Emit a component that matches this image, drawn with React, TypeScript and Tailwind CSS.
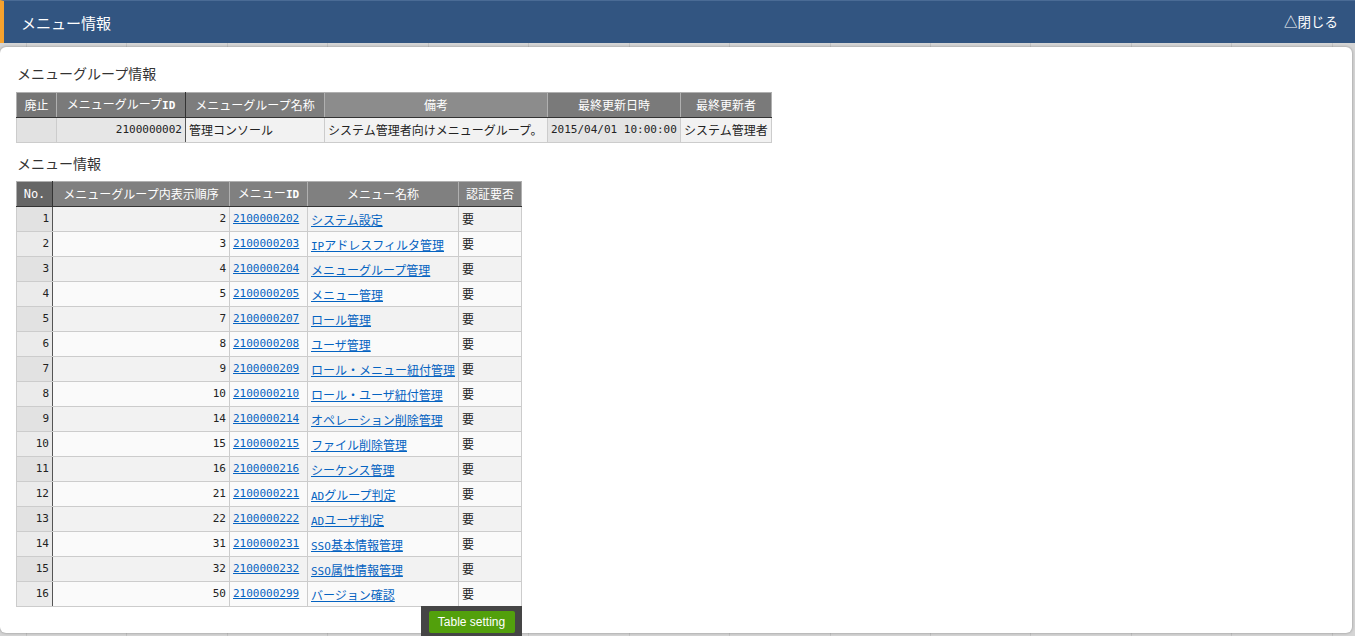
import React from "react";

const jp = "font-['Noto_Sans_CJK_JP',sans-serif]";
const mono = "font-['DejaVu_Sans_Mono','Noto_Sans_CJK_JP',monospace]";

const rows: [number, number, string, string][] = [
  [1, 2, "2100000202", "システム設定"],
  [2, 3, "2100000203", "IPアドレスフィルタ管理"],
  [3, 4, "2100000204", "メニューグループ管理"],
  [4, 5, "2100000205", "メニュー管理"],
  [5, 7, "2100000207", "ロール管理"],
  [6, 8, "2100000208", "ユーザ管理"],
  [7, 9, "2100000209", "ロール・メニュー紐付管理"],
  [8, 10, "2100000210", "ロール・ユーザ紐付管理"],
  [9, 14, "2100000214", "オペレーション削除管理"],
  [10, 15, "2100000215", "ファイル削除管理"],
  [11, 16, "2100000216", "シーケンス管理"],
  [12, 21, "2100000221", "ADグループ判定"],
  [13, 22, "2100000222", "ADユーザ判定"],
  [14, 31, "2100000231", "SSO基本情報管理"],
  [15, 32, "2100000232", "SSO属性情報管理"],
  [16, 50, "2100000299", "バージョン確認"],
];

function Mixed({ text }: { text: string }) {
  const parts = text.match(/[A-Za-z0-9]+|[^A-Za-z0-9]+/g) || [];
  return (
    <>
      {parts.map((p, i) =>
        /^[A-Za-z0-9]+$/.test(p) ? (
          <span key={i} className="font-['DejaVu_Sans_Mono',monospace] text-[11px]">
            {p}
          </span>
        ) : (
          <span key={i} className={`${jp} text-[12px]`}>
            {p}
          </span>
        )
      )}
    </>
  );
}

export default function App() {
  const th =
    "h-[25px] p-0 px-[3px] border border-[#b0b0b0] border-b-[#333] border-b-dotted text-white text-[12px] font-normal text-center whitespace-nowrap";
  const td = "h-[24px] p-0 px-[3px] border border-[#cccccc] text-[#222] whitespace-nowrap";
  return (
    <div className="h-[636px] w-[1355px] overflow-hidden flex flex-col bg-[#d5d5d5] bg-[repeating-linear-gradient(90deg,transparent_0px,transparent_26px,#c4c4c4_26px,#c4c4c4_27px,transparent_27px,transparent_100.45px)]">
      {/* header */}
      <div className="h-[43px] shrink-0 bg-[#325581] border-l-[4px] border-[#f6a22e] flex items-center justify-between pl-[17px] pr-[17px] border-t border-t-[#4a6b95]">
        <div className={`${jp} text-white text-[15px] leading-none`}>メニュー情報</div>
        <div className={`${jp} text-white text-[13.5px] leading-none`}>△閉じる</div>
      </div>

      {/* card */}
      <div className="mt-[4px] mr-[3px] h-[586px] bg-white rounded-[6px] shadow-[0_0_3px_rgba(0,0,0,0.35)] pl-[16px] pt-[16px] relative">
        <div className={`${jp} text-[14px] text-[#333] leading-[20px] pl-[1px]`}>メニューグループ情報</div>
        <table className="mt-[9px] border-collapse table-fixed border border-[#222] w-[755px]">
          <colgroup>
            <col className="w-[40px]" />
            <col className="w-[129px]" />
            <col className="w-[139px]" />
            <col className="w-[223px]" />
            <col className="w-[133px]" />
            <col className="w-[91px]" />
          </colgroup>
          <thead>
            <tr>
              <th className={`${th} ${jp} bg-[#757575]`}>廃止</th>
              <th className={`${th} ${jp} bg-[#7a7a7a] border-r-[#333] border-r-dotted`}>
                メニューグループ<span className="font-['DejaVu_Sans_Mono',monospace] font-bold text-[11px]">ID</span>
              </th>
              <th className={`${th} ${jp} bg-[#7d7d7d]`}>メニューグループ名称</th>
              <th className={`${th} ${jp} bg-[#8c8c8c]`}>備考</th>
              <th className={`${th} ${jp} bg-[#7a7a7a]`}>最終更新日時</th>
              <th className={`${th} ${jp} bg-[#7a7a7a]`}>最終更新者</th>
            </tr>
          </thead>
          <tbody>
            <tr>
              <td className={`${td} h-[25px] bg-[#e2e2e2]`}></td>
              <td className={`${td} h-[25px] bg-[#e6e6e6] text-right text-[11px] border-r-[#555] border-r-dotted ${mono}`}>2100000002</td>
              <td className={`${td} h-[25px] bg-[#f2f2f2] text-[12px] ${jp}`}>管理コンソール</td>
              <td className={`${td} h-[25px] bg-[#f2f2f2] text-[12px] ${jp}`}>システム管理者向けメニューグループ。</td>
              <td className={`${td} h-[25px] bg-[#e4e4e4] text-[11px] ${mono}`}>2015/04/01 10:00:00</td>
              <td className={`${td} h-[25px] bg-[#f2f2f2] text-[12px] ${jp}`}>システム管理者</td>
            </tr>
          </tbody>
        </table>

        <div className={`${jp} text-[14px] text-[#333] leading-[20px] pl-[1px] mt-[10px]`}>メニュー情報</div>
        <div className="mt-[8px] inline-flex flex-col items-end">
          <table className="border-collapse table-fixed border border-[#222] w-[505px]">
            <colgroup>
              <col className="w-[36px]" />
              <col className="w-[177px]" />
              <col className="w-[78px]" />
              <col className="w-[151px]" />
              <col className="w-[63px]" />
            </colgroup>
            <thead>
              <tr>
                <th className={`${th} bg-[#666666] border-r-[#333] border-r-dotted font-['DejaVu_Sans_Mono',monospace] font-bold text-[11px]`}>No.</th>
                <th className={`${th} ${jp} bg-[#808080]`}>メニューグループ内表示順序</th>
                <th className={`${th} ${jp} bg-[#808080]`}>
                  メニュー<span className="font-['DejaVu_Sans_Mono',monospace] font-bold text-[11px]">ID</span>
                </th>
                <th className={`${th} ${jp} bg-[#808080]`}>メニュー名称</th>
                <th className={`${th} ${jp} bg-[#808080]`}>認証要否</th>
              </tr>
            </thead>
            <tbody>
              {rows.map(([no, ord, id, name]) => {
                const odd = no % 2 === 1;
                const bg = odd ? "bg-[#f2f2f2]" : "bg-[#fafafa]";
                return (
                  <tr key={no}>
                    <td className={`${td} ${odd ? "bg-[#e2e2e2]" : "bg-[#ebebeb]"} text-right text-[11px] border-r-[#555] border-r-dotted ${mono}`}>{no}</td>
                    <td className={`${td} ${bg} text-right text-[11px] ${mono}`}>{ord}</td>
                    <td className={`${td} ${bg} text-[11px] ${mono}`}>
                      <span className="text-[#0563c1] underline">{id}</span>
                    </td>
                    <td className={`${td} ${bg}`}>
                      <span className="text-[#0563c1] underline">
                        <Mixed text={name} />
                      </span>
                    </td>
                    <td className={`${td} ${bg} text-[12px] ${jp}`}>要</td>
                  </tr>
                );
              })}
            </tbody>
          </table>
          <div className="w-[101px] h-[32px] bg-[#454545] flex justify-center pt-[5px] -mt-px">
            <div className="w-[86px] h-[22px] bg-[#52a00c] rounded-[2px] text-white text-[12px] font-['Liberation_Sans',Arial,sans-serif] flex items-center justify-center">
              Table setting
            </div>
          </div>
        </div>
      </div>
    </div>
  );
}
